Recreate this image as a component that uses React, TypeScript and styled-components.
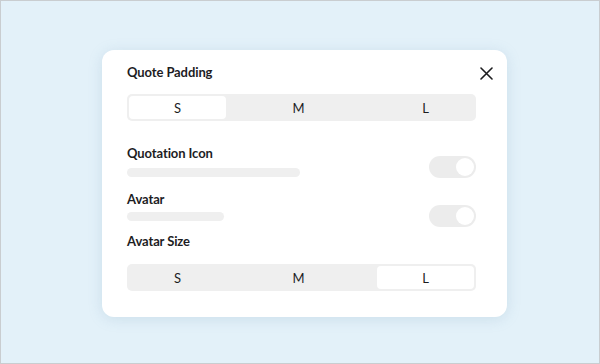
import React from 'react';
import styled, { createGlobalStyle } from 'styled-components';

const Global = createGlobalStyle`
    html, body {
        margin: 0;
        padding: 0;
    }
    body {
        font-family: Lato, "Noto Sans", sans-serif;
        color: #1d1d1f;
    }
`;

const Page = styled.div`
    width: 600px;
    height: 364px;
    box-sizing: border-box;
    border: 1px solid #c9cdd0;
    background: #e3f1f9;
    padding: 49px 0 0 101px;
`;

const Card = styled.div`
    width: 405px;
    box-sizing: border-box;
    background: #fff;
    border-radius: 12px;
    box-shadow: 0 2px 14px rgba(120, 160, 185, 0.22);
    padding: 12px 14px 26px 25px;
    display: flex;
    flex-direction: column;
`;

const Header = styled.div`
    display: flex;
    align-items: center;
    justify-content: space-between;
    height: 20px;
`;

const Label = styled.div`
    font-size: 13px;
    font-weight: 700;
    line-height: 20px;
    letter-spacing: -0.1px;
`;

const Close = styled.button`
    all: unset;
    width: 16px;
    height: 16px;
    display: flex;
    align-items: center;
    justify-content: center;
    margin-top: 2px;
    margin-right: -1px;
`;

const Segmented = styled.div<{ top: number }>`
    width: 349px;
    height: 27px;
    margin-top: ${p => p.top}px;
    box-sizing: border-box;
    padding: 2px;
    border-radius: 5px;
    background: #efefef;
    display: flex;
`;

const Segment = styled.div<{ active?: boolean; grow: number; shift: number }>`
    flex: ${p => p.grow};
    display: flex;
    align-items: center;
    justify-content: center;
    padding-right: ${p => p.shift}px;
    font-size: 13px;
    color: #1d1d1f;
    border-radius: 4px;
    background: ${p => (p.active ? '#fff' : 'transparent')};
`;

const Row = styled.div<{ top: number }>`
    width: 349px;
    margin-top: ${p => p.top}px;
    display: flex;
    justify-content: space-between;
    align-items: flex-start;
`;

const Info = styled.div`
    display: flex;
    flex-direction: column;
`;

const Bar = styled.div<{ w: number; top: number }>`
    width: ${p => p.w}px;
    height: 9px;
    margin-top: ${p => p.top}px;
    border-radius: 5px;
    background: #efefef;
`;

const Toggle = styled.div<{ top: number }>`
    width: 47px;
    height: 22px;
    margin-top: ${p => p.top}px;
    box-sizing: border-box;
    padding: 2px;
    border-radius: 11px;
    background: #ececec;
    display: flex;
    justify-content: flex-end;
    &::after {
        content: '';
        width: 18px;
        height: 18px;
        border-radius: 50%;
        background: #fff;
    }
`;

const sizes = ['S', 'M', 'L'];

function SizePicker({ value, top }: { value: string; top: number }) {
    return (
        <Segmented top={top}>
            {sizes.map(s => (
                <Segment
                    key={s}
                    active={s === value}
                    grow={s === 'M' ? 3 : 2}
                    shift={s === 'M' ? 6 : 0}
                >
                    {s}
                </Segment>
            ))}
        </Segmented>
    );
}

export default function App() {
    return (
        <Page>
            <Global />
            <Card>
                <Header>
                    <Label>Quote Padding</Label>
                    <Close>
                        <svg width="13" height="13" viewBox="0 0 13 13">
                            <path d="M1 1 L12 12 M12 1 L1 12" stroke="#1d1d1f" strokeWidth="1.6" strokeLinecap="round" />
                        </svg>
                    </Close>
                </Header>
                <SizePicker value="S" top={12} />
                <Row top={22}>
                    <Info>
                        <Label>Quotation Icon</Label>
                        <Bar w={173} top={5} />
                    </Info>
                    <Toggle top={13} />
                </Row>
                <Row top={11}>
                    <Info>
                        <Label>Avatar</Label>
                        <Bar w={97} top={3} />
                    </Info>
                    <Toggle top={16} />
                </Row>
                <Row top={4}>
                    <Label>Avatar Size</Label>
                </Row>
                <SizePicker value="L" top={13} />
            </Card>
        </Page>
    );
}
